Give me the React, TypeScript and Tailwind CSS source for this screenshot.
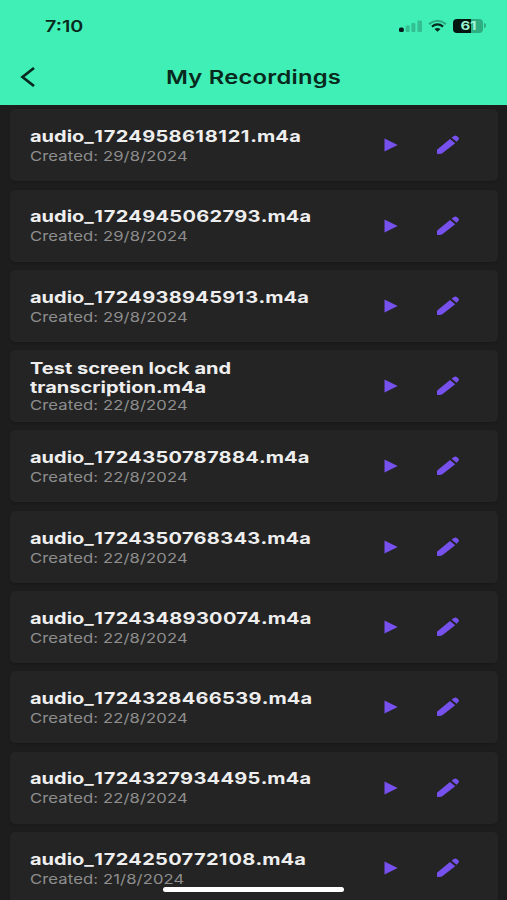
interface Recording {
  lines: string[];
  created: string;
}

const recordings: Recording[] = [
  { lines: ["audio_1724958618121.m4a"], created: "29/8/2024" },
  { lines: ["audio_1724945062793.m4a"], created: "29/8/2024" },
  { lines: ["audio_1724938945913.m4a"], created: "29/8/2024" },
  { lines: ["Test screen lock and", "transcription.m4a"], created: "22/8/2024" },
  { lines: ["audio_1724350787884.m4a"], created: "22/8/2024" },
  { lines: ["audio_1724350768343.m4a"], created: "22/8/2024" },
  { lines: ["audio_1724348930074.m4a"], created: "22/8/2024" },
  { lines: ["audio_1724328466539.m4a"], created: "22/8/2024" },
  { lines: ["audio_1724327934495.m4a"], created: "22/8/2024" },
  { lines: ["audio_1724250772108.m4a"], created: "21/8/2024" },
];

function PlayIcon() {
  return (
    <svg width="14" height="14" viewBox="0 0 14 14" fill="currentColor">
      <path d="M.5.5 13.7 7 .5 13.5Z" />
    </svg>
  );
}

function PencilIcon() {
  return (
    <svg width="24" height="20" viewBox="0 0 24 20" fill="currentColor">
      <path d="M14 4 1.5 14.2Q1 14.7 1 15.3V18.2Q1 19.2 2 19.1L5.2 18.7Q5.8 18.6 6.3 18.2L19.2 8.2Z" />
      <path d="M15.6 2.8 17.9 1.1Q19.4.1 20.8 1.1L22.6 2.6Q23.5 3.8 22.3 5L20.6 6.7Z" />
    </svg>
  );
}

function StatusIcons() {
  return (
    <div className="flex items-center">
      <svg width="24" height="14" viewBox="0 0 24 14" fill="#07191a">
        <rect x="0" y="8.5" width="4.8" height="4.6" rx="1.5" />
        <g opacity=".22">
          <rect x="6.7" y="6.5" width="4" height="6.6" rx="1" />
          <rect x="12.4" y="4" width="4" height="9.1" rx="1" />
          <rect x="18.4" y="1.5" width="4.6" height="11.6" rx="1" />
        </g>
      </svg>
      <svg className="ml-[5px]" width="19" height="14" viewBox="0 0 19 14" fill="none" stroke="#07291c">
        <path d="M1 5.1Q9.5-1.5 18 5.1" strokeWidth="2" opacity=".35" />
        <path d="M3.9 7.6Q9.5 3.3 15.1 7.6" strokeWidth="2.2" />
        <path d="M6.5 10Q9.5 7.9 12.5 10L9.5 12.8Z" fill="#07291c" stroke="none" />
      </svg>
      <div className="ml-[6px] flex h-[14px] w-[30px] items-center justify-center overflow-hidden rounded-[4px] bg-[linear-gradient(90deg,#03150e_61%,#2daf82_61%)] text-[12px] leading-none font-bold text-[#9cf5d4]">
        <span className="scale-x-[1.25]">61</span>
      </div>
      <div className="ml-px h-[5px] w-[2px] rounded-r-full bg-[#2daf82]" />
    </div>
  );
}

function FileName({ name }: { name: string }) {
  // digits are spaced a little wider than words, and the narrow 1 wider still
  const parts = name.split(/(_|1|[02-9]+)/);
  return (
    <span className="origin-left scale-x-[1.25] text-[16px] leading-[19px] font-bold whitespace-nowrap text-[#eeeeee]">
      {parts.map((part, i) => (
        <span
          key={i}
          className={
            part === "1" ? "tracking-[0.8px]" : name.includes("_") && /^[_\d]/.test(part) ? "tracking-[0.25px]" : undefined
          }
        >
          {part}
        </span>
      ))}
    </span>
  );
}

function RecordingCard({ lines, created }: Recording) {
  return (
    <li className="flex h-[72px] shrink-0 items-center rounded-[5px] bg-[#242424] pl-5 shadow-[0_1px_2px_rgba(0,0,0,0.15)]">
      <div className="flex w-[353.5px] shrink-0 flex-col items-start pt-[1.5px]">
        {lines.map((line) => (
          <FileName key={line} name={line} />
        ))}
        <span
          className={`origin-left scale-x-[1.23] pt-px text-[13.5px] leading-[18px] tracking-[0.1px] whitespace-nowrap text-[#8e8e8e] ${
            lines.length > 1 ? "-mt-[2px]" : ""
          }`}
        >
          Created: {created}
        </span>
      </div>
      <button className="text-[#7651ed]" aria-label="Play">
        <PlayIcon />
      </button>
      <button className="ml-[38px] text-[#7651ed]" aria-label="Rename">
        <PencilIcon />
      </button>
    </li>
  );
}

export default function App() {
  return (
    <div className="relative flex h-[900px] w-[507px] flex-col overflow-hidden bg-[#1d1d1d] font-['Inter',sans-serif]">
      <header className="flex h-[105px] shrink-0 flex-col bg-[#40efb5] text-[#08291d]">
        <div className="flex h-[51px] items-center justify-between pr-[21px] pl-[45px]">
          <span className="origin-left scale-x-[1.23] text-[16px] font-semibold">7:10</span>
          <StatusIcons />
        </div>
        <div className="grid h-[52px] grid-cols-[60px_1fr_60px] items-center">
          <button className="pl-5" aria-label="Back">
            <svg width="16" height="20" viewBox="0 0 16 20" fill="none" stroke="currentColor" strokeWidth="2.7">
              <path d="M14 1 2.5 10 14 19" />
            </svg>
          </button>
          <h1 className="scale-x-[1.25] pt-[2px] text-center text-[19px] font-semibold tracking-[0.2px]">My Recordings</h1>
        </div>
      </header>
      <ul className="flex flex-col gap-[8.3px] pt-[4.3px] pr-[9.5px] pl-[10.4px]">
        {recordings.map((recording) => (
          <RecordingCard key={recording.lines[0]} {...recording} />
        ))}
      </ul>
      <div className="absolute bottom-[8px] left-[163px] h-[5px] w-[181px] rounded-full bg-white" />
    </div>
  );
}
